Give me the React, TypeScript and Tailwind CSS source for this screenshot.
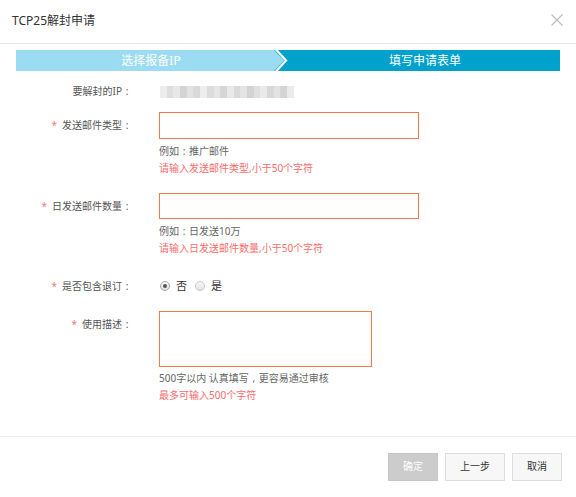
import React, { useState } from 'react';

// pixelated (mosaic) IP address placeholder
const ipBlocks = [
  'bg-[#ececec]', 'bg-[#dedede]', 'bg-[#e8e8e8]', 'bg-[#d4d4d4]', 'bg-[#e2e2e2]',
  'bg-[#d9d9d9]', 'bg-[#ededed]', 'bg-[#dcdcdc]', 'bg-[#e6e6e6]', 'bg-[#d6d6d6]',
  'bg-[#e9e9e9]', 'bg-[#dadada]', 'bg-[#e4e4e4]', 'bg-[#d3d3d3]', 'bg-[#e0e0e0]',
  'bg-[#eaeaea]', 'bg-[#d8d8d8]', 'bg-[#e3e3e3]', 'bg-[#d5d5d5]', 'bg-[#ebebeb]',
];

// centred full-width colon, the way the original font draws it
const Colon = () => <span className="inline-block w-[10px] text-center">:</span>;

interface LabelProps {
  text: string;
  required?: boolean;
  tall?: boolean;
}

const FieldLabel: React.FC<LabelProps> = ({ text, required, tall = true }) => (
  <div
    className={
      'w-[132px] shrink-0 flex items-center justify-end text-[10px] text-[#555] ' +
      (tall ? 'h-[27px]' : 'h-[16px]')
    }
  >
    {required && <span className="text-[#f47a7a] mr-[5px]">*</span>}
    {text}
    <Colon />
  </div>
);

const Radio: React.FC<{ checked: boolean; label: string; onClick: () => void }> = ({
  checked,
  label,
  onClick,
}) => (
  <button type="button" onClick={onClick} className="flex items-center mr-[8px]">
    <span
      className={
        'w-[10px] h-[10px] rounded-full border flex items-center justify-center bg-gradient-to-b from-[#fafafa] to-[#e2e2e2] ' +
        (checked ? 'border-[#a8a8a8]' : 'border-[#c8c8c8]')
      }
    >
      {checked && <span className="w-[4px] h-[4px] rounded-full bg-[#555]" />}
    </span>
    <span className="ml-[6px] text-[11px] text-[#333]">{label}</span>
  </button>
);

export default function App() {
  const [unsub, setUnsub] = useState(false);
  const [mailType, setMailType] = useState('');
  const [mailCount, setMailCount] = useState('');
  const [desc, setDesc] = useState('');

  return (
    <div className="w-[576px] h-[497px] bg-white font-['Noto_Sans','Noto_Sans_CJK_SC',sans-serif] text-[#333]">
      {/* header */}
      <div className="h-[44px] border-b border-[#e8e8e8] flex items-center justify-between pl-[12px] pr-[13px]">
        <h2 className="text-[12px] text-[#333] -mt-[2px]">TCP25解封申请</h2>
        <button type="button" className="w-[12px] h-[12px] -mt-[4px]">
          <svg viewBox="0 0 12 12" width="12" height="12">
            <path d="M0.5 0.5 L11.5 11.5 M11.5 0.5 L0.5 11.5" stroke="#bdbdbd" strokeWidth="1.2" fill="none" />
          </svg>
        </button>
      </div>

      {/* steps */}
      <div className="mx-[16px] mt-[6px] h-[21px] flex text-[12px] text-white">
        <div className="relative flex-1 bg-[#9cdcf3] flex items-center justify-center">
          <span className="pr-[2px]">选择报备IP</span>
          <svg className="absolute right-0 top-0" width="14" height="21" viewBox="0 0 14 21">
            <rect x="0" y="0" width="14" height="21" fill="#00a2cb" />
            <polygon points="0,0 10,10.5 0,21" fill="#9cdcf3" />
            <polyline points="1.5,-1 12,10.5 1.5,22" fill="none" stroke="#ffffff" strokeWidth="2.2" />
          </svg>
        </div>
        <div className="flex-1 bg-[#00a2cb] flex items-center justify-center">
          <span className="pl-[2px]">填写申请表单</span>
        </div>
      </div>

      {/* form */}
      <div className="mt-[12px] flex items-center h-[17px]">
        <div className="w-[132px] flex justify-end text-[10px] text-[#555]">
          要解封的IP
          <Colon />
        </div>
        <div className="ml-[28px] flex h-[12px]">
          {ipBlocks.map((c, i) => (
            <div key={i} className={'w-[6.7px] h-[12px] ' + c} />
          ))}
        </div>
      </div>

      <div className="mt-[12px] flex">
        <FieldLabel text="发送邮件类型" required />
        <div className="ml-[27px]">
          <input
            value={mailType}
            onChange={(e) => setMailType(e.target.value)}
            className="block w-[260px] h-[27px] border border-[#f27a47] outline-none px-2 text-[11px]"
          />
          <p className="mt-[4px] leading-[17px] text-[10px] text-[#666]">
            例如
            <Colon />
            推广邮件
          </p>
          <p className="leading-[17px] text-[10px] text-[#f86c6c]">请输入发送邮件类型,小于50个字符</p>
        </div>
      </div>

      <div className="mt-[16px] flex">
        <FieldLabel text="日发送邮件数量" required />
        <div className="ml-[27px]">
          <input
            value={mailCount}
            onChange={(e) => setMailCount(e.target.value)}
            className="block w-[260px] h-[26px] border border-[#f27a47] outline-none px-2 text-[11px]"
          />
          <p className="mt-[4px] leading-[17px] text-[10px] text-[#666]">
            例如
            <Colon />
            日发送10万
          </p>
          <p className="leading-[17px] text-[10px] text-[#f86c6c]">请输入日发送邮件数量,小于50个字符</p>
        </div>
      </div>

      <div className="mt-[21px] flex items-center">
        <FieldLabel text="是否包含退订" required tall={false} />
        <div className="ml-[28px] flex items-center">
          <Radio checked={!unsub} label="否" onClick={() => setUnsub(false)} />
          <Radio checked={unsub} label="是" onClick={() => setUnsub(true)} />
        </div>
      </div>

      <div className="mt-[16px] flex">
        <FieldLabel text="使用描述" required />
        <div className="ml-[27px]">
          <textarea
            value={desc}
            onChange={(e) => setDesc(e.target.value)}
            className="block w-[213px] h-[56px] border border-[#f27a47] outline-none resize-none p-1 text-[11px]"
          />
          <p className="mt-[3px] leading-[17px] text-[10px] text-[#666]">
            500字以内 认真填写<span className="inline-block w-[10px] text-center">,</span>更容易通过审核
          </p>
          <p className="leading-[17px] text-[10px] text-[#f86c6c]">最多可输入500个字符</p>
        </div>
      </div>

      {/* footer */}
      <div className="mt-[32px] border-t border-[#ebebeb] pt-[16px] pr-[14px] flex justify-end gap-[7px] text-[10px]">
        <button type="button" className="w-[50px] h-[28px] bg-[#cccccc] border border-[#c6c6c6] text-white">
          确定
        </button>
        <button type="button" className="w-[60px] h-[28px] bg-[#f7f7f7] border border-[#dddddd] text-[#333]">
          上一步
        </button>
        <button type="button" className="w-[50px] h-[28px] bg-[#f7f7f7] border border-[#dddddd] text-[#333]">
          取消
        </button>
      </div>
    </div>
  );
}
